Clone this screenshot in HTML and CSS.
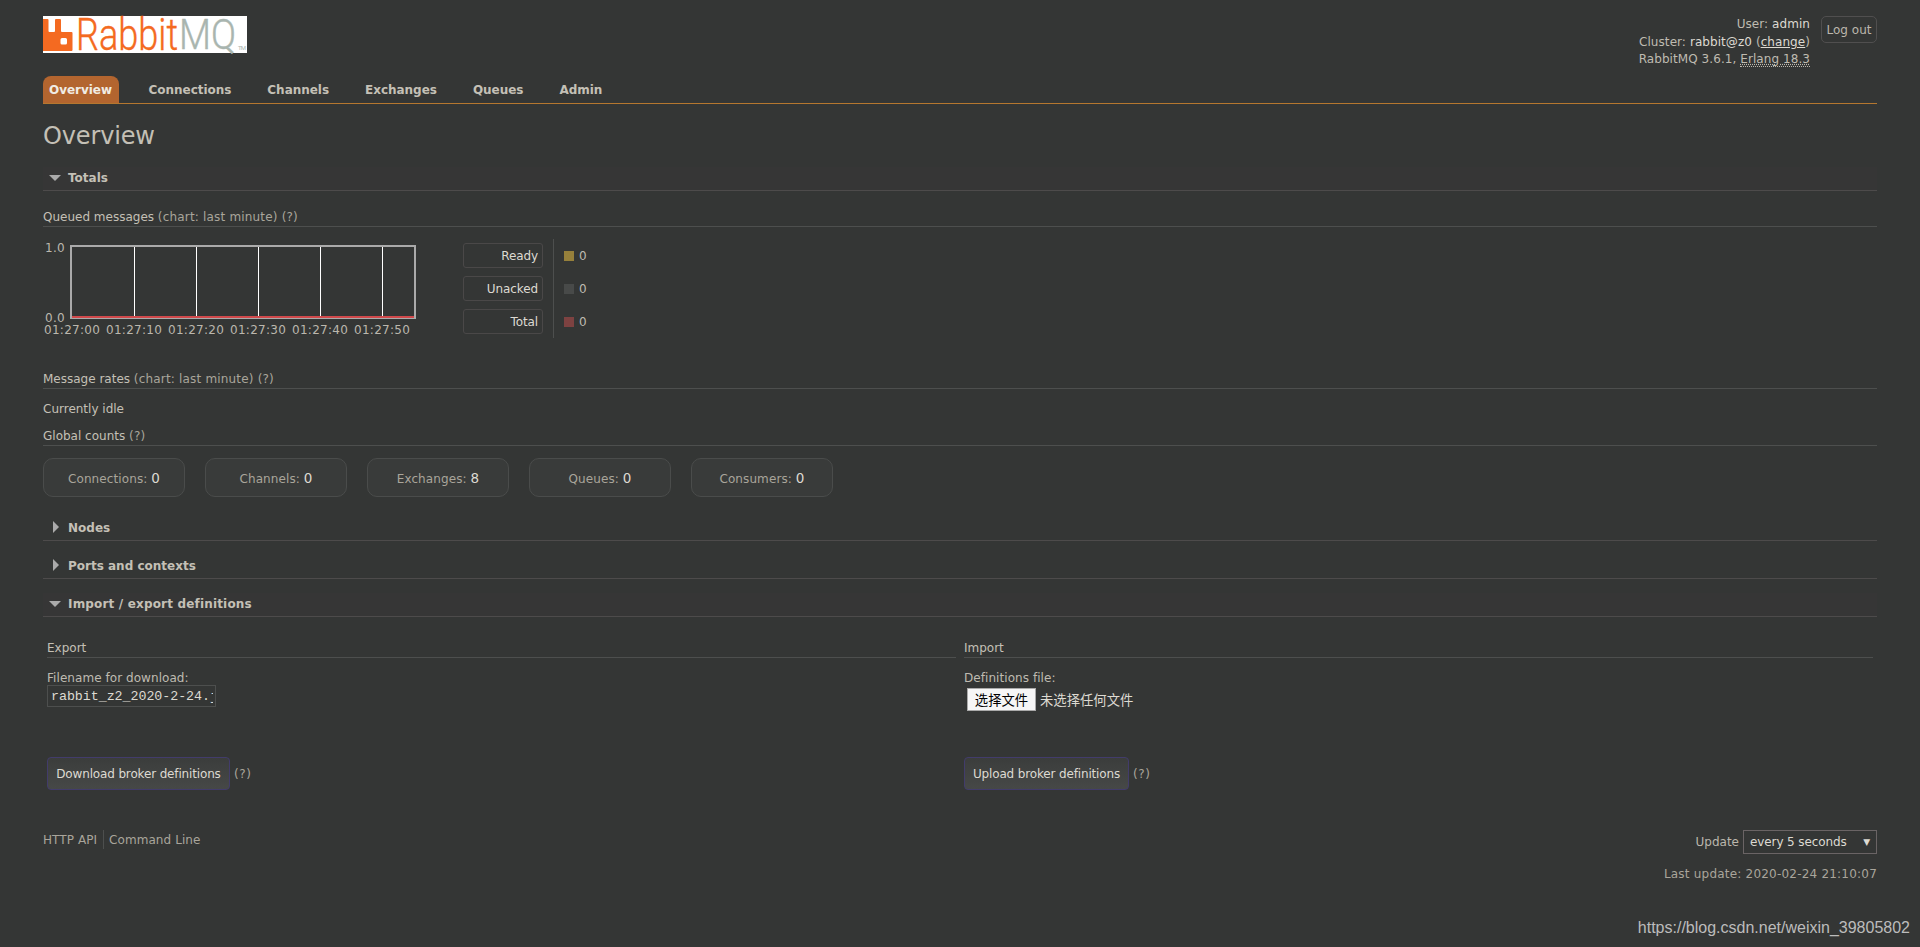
FILE: index.html
```html
<!DOCTYPE html>
<html lang="en">
<head>
  <meta charset="UTF-8">
  <title>RabbitMQ Management</title>
  <link rel="stylesheet" href="styles.css">
</head>
<body>

  <div class="header">
    <svg class="logo" width="204" height="37" viewBox="0 0 204 37">
      <rect width="204" height="37" fill="#fff"/>
      <path fill="#f46a21" fill-rule="evenodd" d="M0 3h4.500q1 0 1 1v11q0 1 1 1h4.500q1 0 1-1v-11q0-1 1-1h4q1 0 1 1v11q0 1 1 1h9.500q1 0 1 1v17q0 1-1 1H0zM19 22q-1.500 0-1.500 1.500v3.500q0 1.500 1.500 1.500h3.500q1.500 0 1.500-1.500v-3.500q0-1.500-1.500-1.500z"/>
      <text class="logo-text rabbit" x="33" y="34" textLength="102" lengthAdjust="spacingAndGlyphs">Rabbit</text>
      <text class="logo-text mq" x="136" y="33" textLength="57" lengthAdjust="spacingAndGlyphs">MQ</text>
      <text class="logo-tm" x="195" y="34" textLength="8">TM</text>
    </svg>
    <div class="login">
      <div class="login-details">
        <div>User: <b>admin</b></div>
        <div>Cluster: <b>rabbit@z0</b> (<a class="change" href="#">change</a>)</div>
        <div>RabbitMQ 3.6.1, <abbr>Erlang 18.3</abbr></div>
      </div>
      <button class="logout">Log out</button>
    </div>
  </div>

  <ul class="tabs">
    <li class="selected">Overview</li>
    <li>Connections</li>
    <li>Channels</li>
    <li>Exchanges</li>
    <li>Queues</li>
    <li>Admin</li>
  </ul>

  <h1>Overview</h1>

  <h2 class="section open">Totals</h2>
  <h3 class="queued">Queued messages <span>(chart: last minute) (?)</span></h3>
  <div class="chart-row">
    <svg class="chart" width="380" height="100">
      <rect x="28" y="7" width="344" height="72" fill="none" stroke="#aaa" stroke-width="2"/>
      <path class="grid" d="M91.500 8v70M153.500 8v70M215.500 8v70M277.500 8v70M339.500 8v70"/>
      <path d="M29 78h342" stroke="#d0494b" stroke-width="2"/>
      <text x="2" y="13">1.0</text>
      <text x="2" y="83">0.0</text>
      <text x="1" y="95">01:27:00</text>
      <text x="63" y="95">01:27:10</text>
      <text x="125" y="95">01:27:20</text>
      <text x="187" y="95">01:27:30</text>
      <text x="249" y="95">01:27:40</text>
      <text x="311" y="95">01:27:50</text>
    </svg>
    <div class="legend-names">
      <span>Ready</span>
      <span>Unacked</span>
      <span>Total</span>
    </div>
    <div class="legend-values">
      <div><i class="ready"></i>0</div>
      <div><i class="unacked"></i>0</div>
      <div><i class="total"></i>0</div>
    </div>
  </div>

  <h3>Message rates <span>(chart: last minute) (?)</span></h3>
  <p class="idle">Currently idle</p>
  <h3>Global counts <span>(?)</span></h3>
  <div class="counts">
    <div>Connections: <b>0</b></div>
    <div>Channels: <b>0</b></div>
    <div>Exchanges: <b>8</b></div>
    <div>Queues: <b>0</b></div>
    <div>Consumers: <b>0</b></div>
  </div>

  <h2 class="section closed">Nodes</h2>
  <h2 class="section closed">Ports and contexts</h2>
  <h2 class="section open definitions">Import / export definitions</h2>

  <div class="two-col">
    <div>
      <h3>Export</h3>
      <div class="field">
        <label>Filename for download:</label>
        <input class="filename" type="text" value="rabbit_z2_2020-2-24.json">
      </div>
      <div class="action"><button class="big">Download broker definitions</button> (?)</div>
    </div>
    <div>
      <h3>Import</h3>
      <div class="field">
        <label>Definitions file:</label>
        <div class="file"><span class="file-button">选择文件</span><span>未选择任何文件</span></div>
      </div>
      <div class="action"><button class="big upload">Upload broker definitions</button> (?)</div>
    </div>
  </div>

  <div class="footer">
    <div class="links"><a>HTTP API</a><a>Command Line</a></div>
    <div class="status">
      <div class="update">Update <span class="select">every 5 seconds <i>▼</i></span></div>
      <div class="last">Last update: 2020-02-24 21:10:07</div>
    </div>
  </div>

  <div class="watermark">https://blog.csdn.net/weixin_39805802</div>

</body>
</html>
```
FILE: styles.css
```css
* { box-sizing: border-box; }
body {
  margin: 0;
  padding: 0 43px;
  height: 947px;
  overflow: hidden;
  background: #343635;
  color: #bfbbb1;
  font: 12px/16px "DejaVu Sans", Verdana, sans-serif;
}
b { font-weight: normal; color: #dddad2; }
h1, h2, h3, p, ul { margin: 0; padding: 0; font-weight: normal; }

.header {
  display: flex;
  justify-content: space-between;
  height: 76px;
}
.logo { margin-top: 16px; overflow: visible; }
.logo-text { font: 300 45px Roboto, sans-serif; }
.rabbit { fill: #f46a21; stroke: #f46a21; stroke-width: 0.4px; }
.mq { font-size: 42px; fill: #a9b5af; stroke: #a9b5af; stroke-width: 0.4px; }
.logo-tm { font: 6px Roboto, sans-serif; fill: #a9b5af; }
.login { display: flex; align-items: flex-start; gap: 11px; }
.login-details {
  padding-top: 16px;
  line-height: 17.5px;
  letter-spacing: 0.07px;
  text-align: right;
}
.change { color: #dddad2; }
abbr { border-bottom: 1px dotted #bbb7ad; text-decoration: underline dotted; }
.logout {
  margin-top: 16px;
  width: 56px;
  height: 27px;
  padding: 0;
  border: 1px solid #504f4f;
  border-radius: 5px;
  background: none;
  color: #bbb7ad;
  font: inherit;
}

.tabs {
  display: flex;
  height: 28px;
  list-style: none;
  border-bottom: 1px solid #b5772f;
  font-weight: bold;
  line-height: 28px;
  letter-spacing: -0.03px;
  color: #c4c0b6;
}
.tabs li { height: 27px; margin-right: 24px; padding: 0 6px; }
.tabs .selected {
  width: 76px;
  margin-right: 23.5px;
  border-radius: 8px 8px 0 0;
  background: #b3652f;
  color: #f0ece4;
}

h1 {
  margin-top: 17px;
  font-size: 24px;
  line-height: 30px;
  letter-spacing: -0.15px;
  color: #c4c0b6;
}
.section {
  display: flex;
  align-items: center;
  height: 24px;
  margin-top: 14px;
  padding: 0 0 2px 6px;
  border-bottom: 1px solid #4d4b4b;
  font-size: 12px;
  font-weight: bold;
  color: #c4c0b6;
}
h1 + .section { margin-top: 16px; }
.definitions { letter-spacing: 0.17px; }
.section::before { content: ""; border: solid transparent; }
.open { background: #363636; }
.open::before {
  border-width: 6px 6px 0;
  border-top-color: #aaa;
  margin-right: 7px;
}
.closed::before {
  border-width: 6px 0 6px 6px;
  border-left-color: #aaa;
  margin: 0 9px 1px 4px;
}
h3 {
  height: 18px;
  border-bottom: 1px solid #4d4f4e;
  font-size: 12px;
  color: #c4c0b6;
}
h3 span { color: #a9a59b; letter-spacing: 0.18px; }
.queued { margin-top: 18px; }

.chart-row { display: flex; height: 144px; padding-top: 12px; }
.chart text { fill: #bbb7ad; letter-spacing: 0.28px; }
.grid { stroke: #fff; shape-rendering: crispEdges; }
.legend-names {
  display: flex;
  flex-direction: column;
  gap: 8px;
  width: 131px;
  height: 99px;
  padding: 4px 10px 0 40px;
  border-right: 1px solid #4d4f4e;
}
.legend-names span {
  height: 25px;
  padding-right: 4px;
  border: 1px solid #4a4848;
  border-radius: 3px;
  line-height: 25px;
  text-align: right;
  letter-spacing: -0.1px;
  color: #dddad2;
}
.legend-values { padding: 4px 0 0 10px; line-height: 26px; }
.legend-values div { display: flex; align-items: center; height: 25px; margin-bottom: 8px; }
.legend-values i { width: 10px; height: 10px; margin-right: 5px; }
.ready { background: #96803b; }
.unacked { background: #484a49; }
.total { background: #7d4241; }

.idle { margin: 12px 0 11px; color: #c4c0b6; }
.counts { display: flex; gap: 20px; margin: 12px 0 20px; }
.counts div {
  width: 142px;
  height: 39px;
  border: 1px solid #4a4c4b;
  border-radius: 10px;
  background: #393b3a;
  line-height: 38px;
  letter-spacing: 0.1px;
  text-align: center;
  color: #a9a59b;
}
.counts b { font-size: 13.5px; }

.two-col {
  display: grid;
  grid-template-columns: 909px 909px;
  gap: 8px;
  padding: 23px 4px 0;
}
.field { height: 99px; padding-top: 13px; }
.field label { display: block; height: 14px; line-height: 15px; letter-spacing: 0.06px; }
.filename {
  display: block;
  width: 169px;
  height: 22px;
  padding: 0 2px 0 3px;
  border: 1px solid #4d4f4e;
  background: none;
  color: #dddad2;
  font: 13.333px "Liberation Mono", monospace;
  letter-spacing: -0.05px;
}
.file {
  display: flex;
  gap: 4px;
  margin: 3px 0 0 3px;
  font: 13.333px/23px "Noto Sans CJK SC", sans-serif;
  color: #dddad2;
}
.file-button {
  width: 69px;
  height: 23px;
  border: 1px solid #aaa;
  background: #f6f6f6;
  line-height: 21px;
  text-align: center;
  color: #000;
}
.action {
  display: flex;
  align-items: center;
  gap: 4px;
  letter-spacing: 0.6px;
  color: #a9a59b;
}
.big {
  width: 183px;
  height: 33px;
  padding: 0;
  border: 1px solid #423c6b;
  border-radius: 4px;
  background: linear-gradient(#3b3d3c, #464847);
  color: #dddad2;
  font: inherit;
  letter-spacing: -0.15px;
}
.upload { width: 165px; }

.footer { display: flex; justify-content: space-between; margin-top: 40px; color: #a9a59b; }
.links { display: flex; height: 19px; line-height: 20px; letter-spacing: 0.08px; }
.links a:first-child {
  width: 61px;
  margin-right: 5px;
  border-right: 1px solid #4d4f4e;
}
.status { text-align: right; }
.update { display: flex; justify-content: flex-end; align-items: center; gap: 4px; color: #bbb7ad; }
.select {
  display: flex;
  justify-content: space-between;
  width: 134px;
  height: 24px;
  padding: 0 6px;
  border: 1px solid #6a6465;
  line-height: 23px;
  letter-spacing: -0.1px;
  color: #dddad2;
}
.select i { font-size: 9px; font-style: normal; }
.last { margin-top: 12px; letter-spacing: 0.21px; }

.watermark {
  position: absolute;
  right: 10px;
  bottom: 9px;
  font: 16px/20px "Liberation Sans", Arial, sans-serif;
  color: #bcbcbc;
}
```
